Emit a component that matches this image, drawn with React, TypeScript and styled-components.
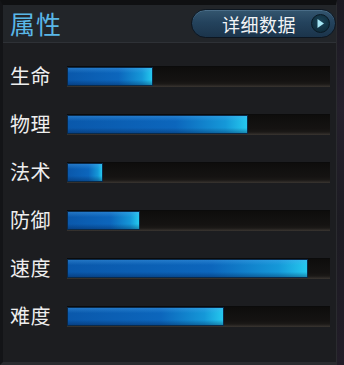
import styled, { createGlobalStyle } from "styled-components";

const GlobalStyle = createGlobalStyle`
    html, body {
        margin: 0;
        padding: 0;
        background: #151619;
    }
    * {
        box-sizing: border-box;
    }
`;

const FONT = `"Noto Sans CJK SC", "Noto Sans", sans-serif`;

const stats = [
    { label: "生命", value: 86 },
    { label: "物理", value: 181 },
    { label: "法术", value: 36 },
    { label: "防御", value: 73 },
    { label: "速度", value: 241 },
    { label: "难度", value: 157 },
];

const TRACK_WIDTH = 263;

const Frame = styled.div`
    width: 344px;
    height: 365px;
    display: flex;
    background: #141518;
    font-family: ${FONT};
`;

const Panel = styled.div`
    flex: 1;
    display: flex;
    flex-direction: column;
    background: #1c1d20;
    border-top: 5px solid #0f1012;
    border-left: 3px solid #131417;
    border-right: 1px solid #2a2b2f;
    border-bottom: 3px solid #2a2b2f;
`;

const SideStrip = styled.div`
    width: 7px;
    background: linear-gradient(180deg, #1b1a22 0%, #25202c 30%, #1c1b22 60%, #221d28 100%);
`;

const Header = styled.div`
    height: 38px;
    display: flex;
    align-items: center;
    justify-content: space-between;
    padding: 0 0 0 7px;
    background: #222529;
    border-bottom: 1px solid #2e3136;
`;

const Title = styled.h1`
    margin: 0;
    font-size: 25px;
    line-height: 1;
    font-weight: 400;
    color: #5ab7e7;
    letter-spacing: 1px;
`;

const DetailButton = styled.button`
    width: 145px;
    height: 29px;
    display: flex;
    align-items: center;
    justify-content: flex-end;
    gap: 15px;
    padding: 0 5px 0 0;
    border-radius: 15px;
    border: 1px solid #0d1620;
    background: linear-gradient(180deg, #34566f 0%, #24435d 45%, #1b344b 100%);
    box-shadow: inset 0 1px 0 rgba(140, 180, 210, 0.25);
    color: #f2f4f6;
    font-family: ${FONT};
    font-size: 18px;
    line-height: 1;
    letter-spacing: 0.5px;
    cursor: pointer;
`;

const PlayCircle = styled.span`
    width: 19px;
    height: 19px;
    display: flex;
    align-items: center;
    justify-content: center;
    border-radius: 50%;
    background: radial-gradient(circle at 50% 40%, #1a4458 0%, #0c2533 100%);
    border: 1px solid #0a1a24;
`;

const List = styled.div`
    display: flex;
    flex-direction: column;
    padding-top: 9px;
`;

const Row = styled.div`
    height: 48px;
    display: flex;
    align-items: center;
    padding-left: 7px;
`;

const Label = styled.span`
    width: 57px;
    font-size: 20px;
    line-height: 1;
    color: #eeeeee;
    letter-spacing: 0.5px;
`;

const Track = styled.div`
    width: ${TRACK_WIDTH}px;
    height: 21px;
    display: flex;
    background: linear-gradient(180deg, #0e0d0c 0%, #151312 70%, #1b1917 85%, #3a3531 100%);
    border-top: 1px solid #0b0b0b;
`;

const Fill = styled.div`
    height: 19px;
    border: 1px solid #0a2a4a;
    background:
        linear-gradient(180deg, rgba(80, 170, 240, 0.35) 0%, rgba(0, 0, 0, 0) 30%, rgba(0, 0, 0, 0) 70%, rgba(0, 20, 60, 0.35) 100%),
        linear-gradient(90deg, #0a58ab 0%, #0c66bc 60%, #1598d8 88%, #25c8ee 100%);
`;

const PlayIcon = () => (
    <svg width="9" height="11" viewBox="0 0 9 11">
        <path d="M1.5 1 L8 5.5 L1.5 10 Z" fill="#a5e6f4" />
    </svg>
);

const App = () => {
    return (
        <>
            <GlobalStyle />
            <Frame>
                <Panel>
                    <Header>
                        <Title>属性</Title>
                        <DetailButton>
                            详细数据
                            <PlayCircle>
                                <PlayIcon />
                            </PlayCircle>
                        </DetailButton>
                    </Header>
                    <List>
                        {stats.map((s) => (
                            <Row key={s.label}>
                                <Label>{s.label}</Label>
                                <Track>
                                    <Fill style={{ width: `${s.value}px` }} />
                                </Track>
                            </Row>
                        ))}
                    </List>
                </Panel>
                <SideStrip />
            </Frame>
        </>
    );
};

export default App;
